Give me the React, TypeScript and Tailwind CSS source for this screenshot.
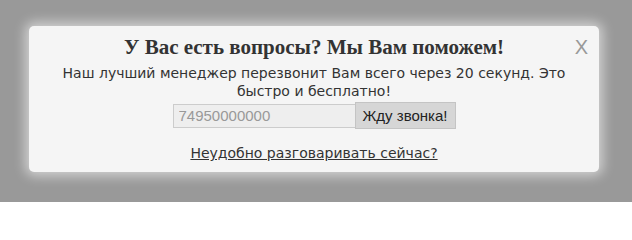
import React from "react";

export default function App() {
  return (
    <div className="w-[632px] h-[202px] bg-[#999999] flex justify-start pl-[29px] pt-[26px] overflow-hidden">
      <div className="relative w-[570px] h-[146px] bg-[#f5f5f5] rounded-[5px] shadow-[0_0_12px_4px_rgba(255,255,255,0.55)] flex flex-col items-center pt-[9px] px-[30px] text-[#333333]">
        <span className="absolute top-[11px] right-[11px] text-[20px] leading-[20px] text-[#999999] font-['Liberation_Sans',Arial,sans-serif] cursor-pointer">
          X
        </span>
        <h2 className="font-['Liberation_Serif','Times_New_Roman',serif] font-bold text-[21px] leading-[24px] text-center">
          У Вас есть вопросы? Мы Вам поможем!
        </h2>
        <p className="mt-[5px] font-['DejaVu_Sans',Verdana,sans-serif] text-[14px] leading-[18px] text-center">
          Наш лучший менеджер перезвонит Вам всего через 20 секунд. Это быстро и бесплатно!
        </p>
        <div className="mt-[2px] flex items-center">
          <input
            type="text"
            placeholder="74950000000"
            className="w-[183px] h-[24px] bg-[#eeeeee] border border-[#cccccc] px-[5px] text-[15px] font-['Liberation_Sans',Arial,sans-serif] text-[#333] placeholder:text-[#999999] outline-none"
          />
          <button className="w-[101px] h-[27px] -ml-px bg-[#d6d6d6] border border-[#c4c4c4] text-[15px] font-['Liberation_Sans',Arial,sans-serif] text-[#222222] leading-none">
            Жду звонка!
          </button>
        </div>
        <a
          href="#"
          className="mt-[15px] font-['DejaVu_Sans',Verdana,sans-serif] text-[14px] leading-[18px] underline text-[#333333]"
        >
          Неудобно разговаривать сейчас?
        </a>
      </div>
    </div>
  );
}
